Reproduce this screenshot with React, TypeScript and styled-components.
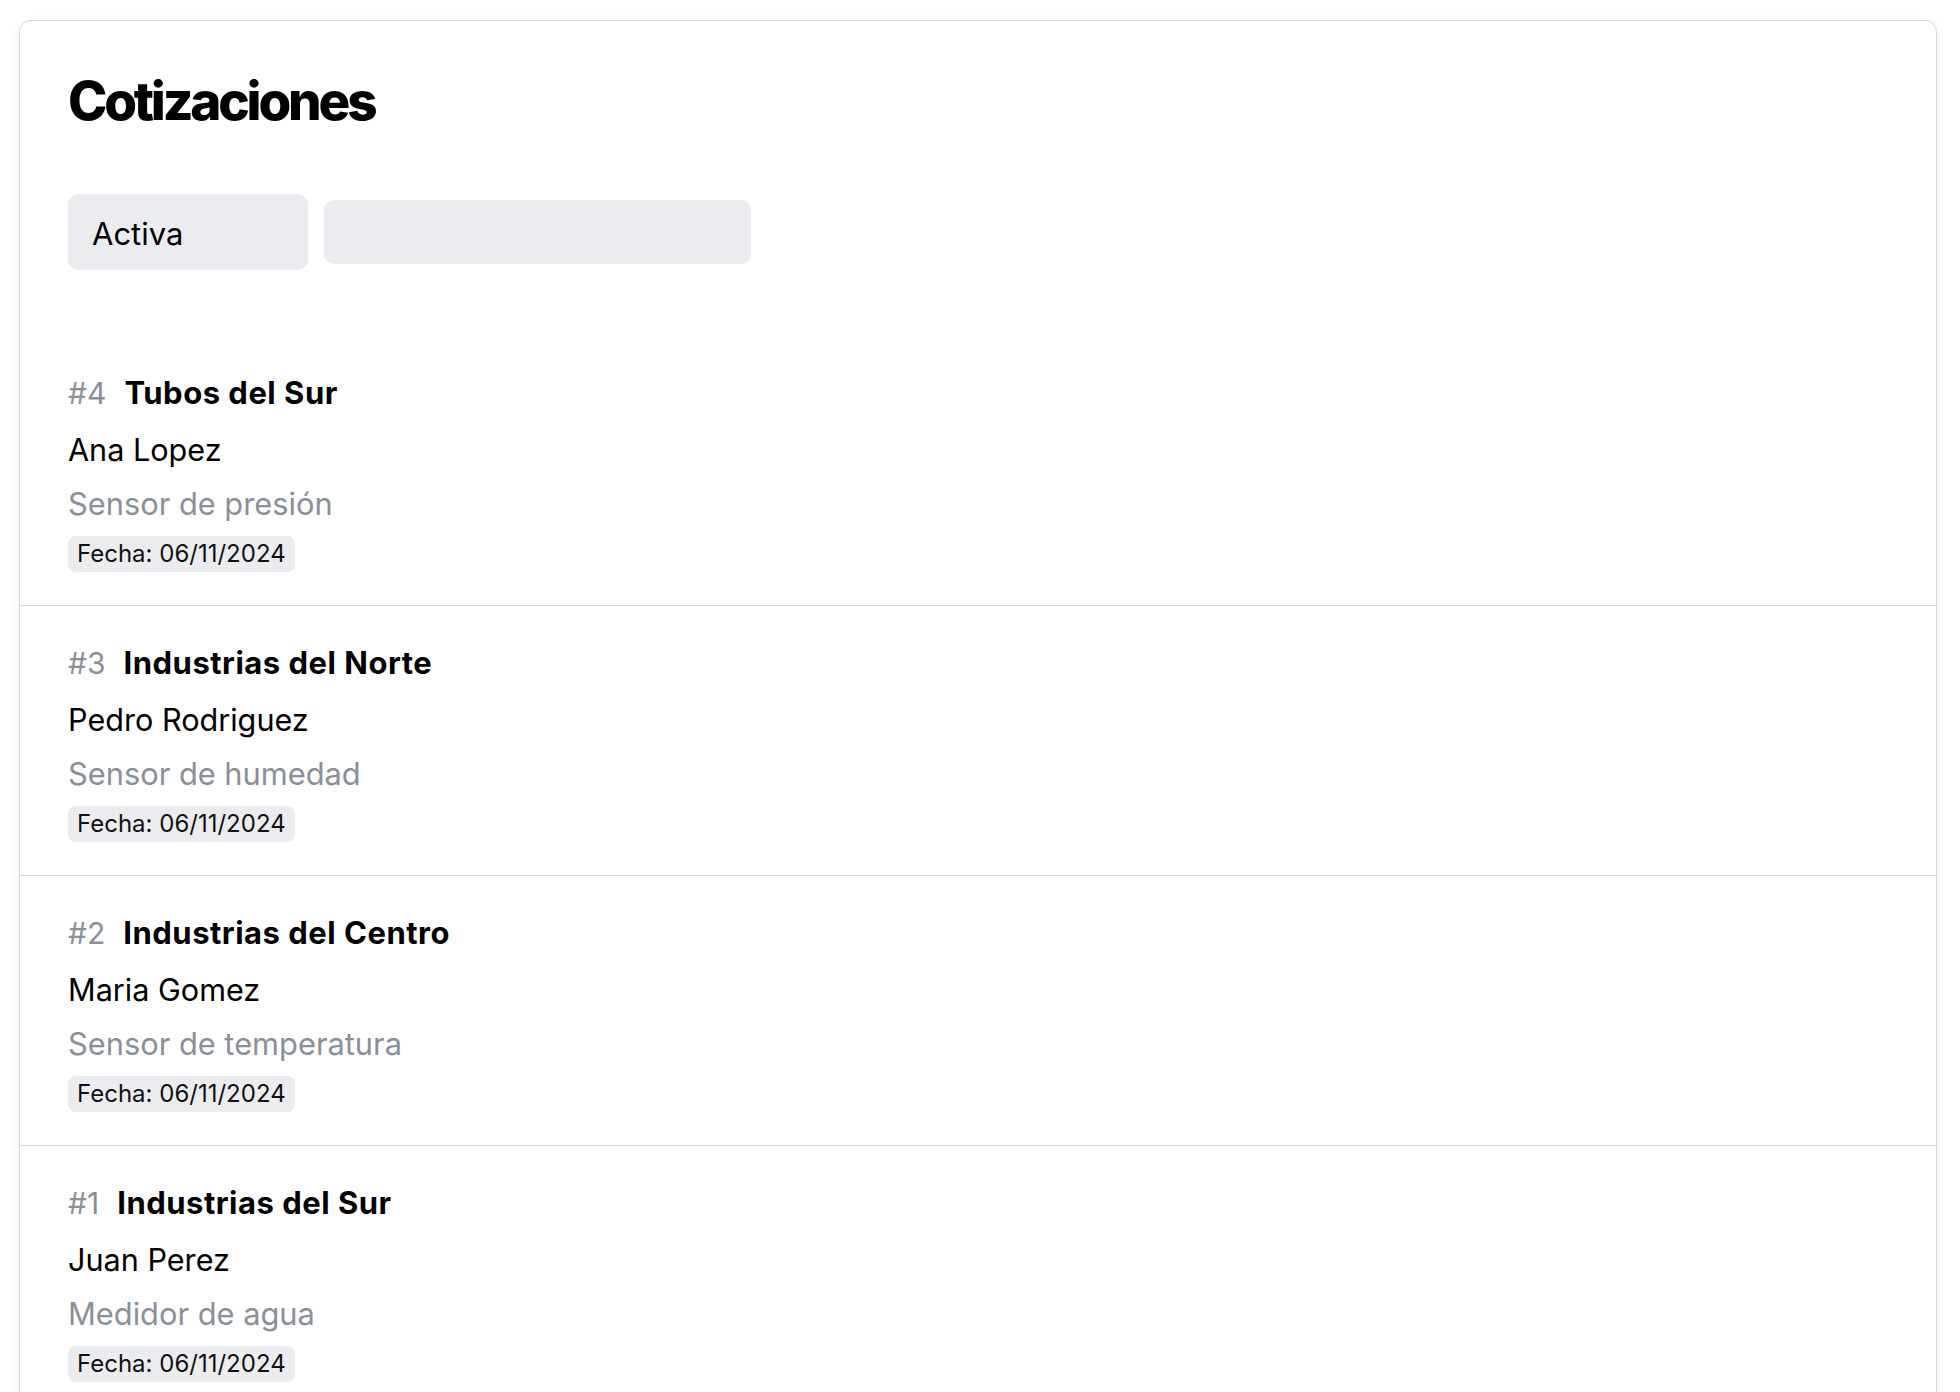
import React from "react";
import styled, { createGlobalStyle } from "styled-components";

const GlobalStyle = createGlobalStyle`
  html, body {
    margin: 0;
    padding: 0;
    background: #ffffff;
  }
  body {
    font-family: Inter, "Noto Sans", "Liberation Sans", sans-serif;
    color: #0a0a0a;
    -webkit-font-smoothing: antialiased;
  }
  * { box-sizing: border-box; }
`;

const Page = styled.div`
  padding: 20px 23px 0 19px;
`;

const Card = styled.section`
  background: #ffffff;
  border: 1px solid #d3d6db;
  border-radius: 12px;
  box-shadow: 0 2px 12px rgba(15, 23, 42, 0.05);
  overflow: hidden;
`;

const Header = styled.header`
  padding: 48px 48px 66px;
`;

const Title = styled.h1`
  margin: 0;
  font-size: 53px;
  line-height: 65px;
  font-weight: 800;
  letter-spacing: -3.2px;
  color: #000000;
`;

const Filters = styled.div`
  display: flex;
  align-items: center;
  gap: 16px;
  margin-top: 60px;
`;

const StatusSelect = styled.div`
  width: 240px;
  height: 76px;
  padding: 3px 24px 0;
  border-radius: 10px;
  background: #ebecf0;
  font-size: 31px;
  line-height: 73px;
  color: #000000;
`;

const SearchInput = styled.input`
  width: 427px;
  height: 64px;
  border: none;
  outline: none;
  border-radius: 10px;
  background: #ebecf0;
  padding: 0 20px;
  font-family: inherit;
  font-size: 30px;
  color: #000000;
`;

const List = styled.ul`
  list-style: none;
  margin: 0;
  padding: 0;
`;

const Item = styled.li`
  display: flex;
  flex-direction: column;
  align-items: flex-start;
  padding: 33px 48px;
  border-bottom: 1px solid #d3d6db;
`;

const ItemTitle = styled.div`
  display: flex;
  align-items: baseline;
  gap: 18px;
  line-height: 48px;
`;

const Number = styled.span`
  font-size: 30px;
  color: #8a9099;
  font-weight: 400;
`;

const Company = styled.span`
  font-size: 31px;
  letter-spacing: 0.5px;
  color: #000000;
  font-weight: 700;
`;

const Contact = styled.div`
  margin-top: 9px;
  font-size: 30.6px;
  line-height: 48px;
  color: #000000;
`;

const Product = styled.div`
  margin-top: 6px;
  font-size: 30.8px;
  line-height: 48px;
  color: #8a9099;
`;

const DateBadge = styled.span`
  display: inline-block;
  margin-top: 8px;
  height: 36px;
  padding: 0 9px;
  border-radius: 8px;
  background: #ebecf0;
  font-size: 24px;
  line-height: 36px;
  color: #111111;
`;

type Quote = {
  id: number;
  company: string;
  contact: string;
  product: string;
  date: string;
};

const quotes: Quote[] = [
  { id: 4, company: "Tubos del Sur", contact: "Ana Lopez", product: "Sensor de presión", date: "06/11/2024" },
  { id: 3, company: "Industrias del Norte", contact: "Pedro Rodriguez", product: "Sensor de humedad", date: "06/11/2024" },
  { id: 2, company: "Industrias del Centro", contact: "Maria Gomez", product: "Sensor de temperatura", date: "06/11/2024" },
  { id: 1, company: "Industrias del Sur", contact: "Juan Perez", product: "Medidor de agua", date: "06/11/2024" },
];

export default function App() {
  return (
    <>
      <GlobalStyle />
      <Page>
        <Card>
          <Header>
            <Title>Cotizaciones</Title>
            <Filters>
              <StatusSelect>Activa</StatusSelect>
              <SearchInput aria-label="Buscar" />
            </Filters>
          </Header>
          <List>
            {quotes.map((q) => (
              <Item key={q.id}>
                <ItemTitle>
                  <Number>#{q.id}</Number>
                  <Company>{q.company}</Company>
                </ItemTitle>
                <Contact>{q.contact}</Contact>
                <Product>{q.product}</Product>
                <DateBadge>Fecha: {q.date}</DateBadge>
              </Item>
            ))}
          </List>
        </Card>
      </Page>
    </>
  );
}
